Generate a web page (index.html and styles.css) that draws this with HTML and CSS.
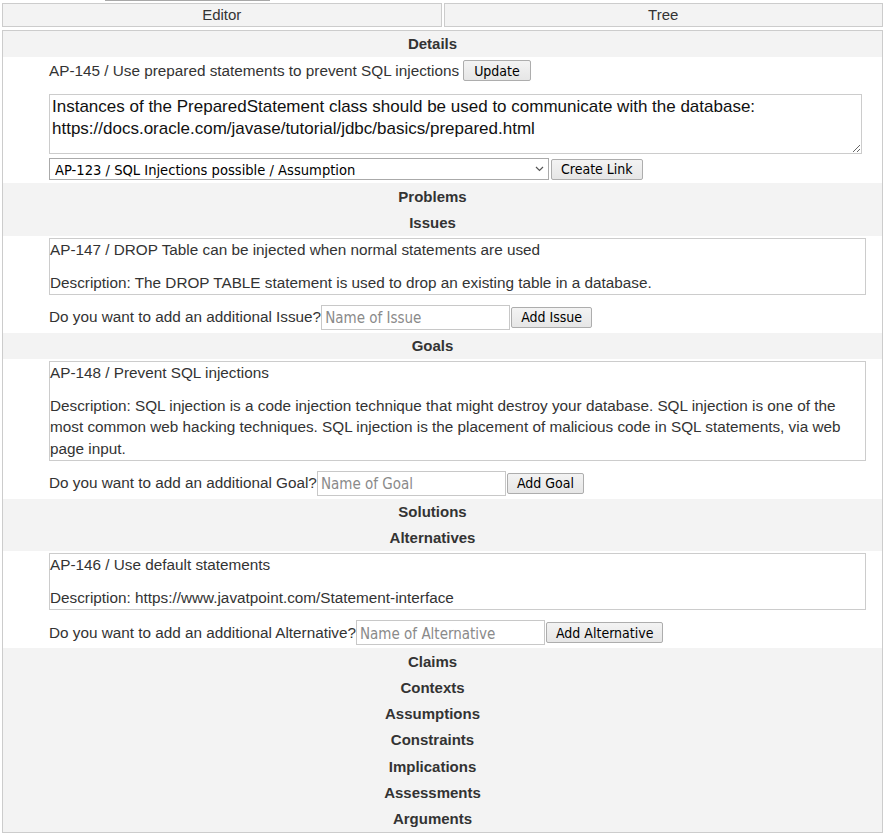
FILE: index.html
```html
<!DOCTYPE html>
<html lang="en">
<head>
<meta charset="utf-8">
<title>Editor</title>
<link rel="stylesheet" href="styles.css">
</head>
<body>
<div class="page">
  <div class="topbar"></div>
  <div class="tabs">
    <div class="tab">Editor</div>
    <div class="tab">Tree</div>
  </div>
  <div class="panel">
    <div class="section-h">Details</div>
    <div class="content">
      <div class="title-row"><span class="title-text">AP-145 / Use prepared statements to prevent SQL injections</span><button class="btn btn-update">Update</button></div>
      <textarea class="desc">Instances of the PreparedStatement class should be used to communicate with the database: https://docs.oracle.com/javase/tutorial/jdbc/basics/prepared.html</textarea>
      <div class="link-row">
        <div class="select-wrap">
          <select class="link-select"><option>AP-123 / SQL Injections possible / Assumption</option></select>
          <svg class="chev" width="9" height="6" viewBox="0 0 9 6"><path d="M1 1 L4.5 4.5 L8 1" fill="none" stroke="#555" stroke-width="1.2"/></svg>
        </div>
        <button class="btn btn-link">Create Link</button>
      </div>
    </div>
    <div class="section-h">Problems</div>
    <div class="section-h">Issues</div>
    <div class="content">
      <div class="card">
        <p class="card-title">AP-147 / DROP Table can be injected when normal statements are used</p>
        <p class="card-desc">Description: The DROP TABLE statement is used to drop an existing table in a database.</p>
      </div>
      <div class="add-row"><span>Do you want to add an additional Issue?</span><input class="name-input" type="text" placeholder="Name of Issue"><button class="btn btn-add">Add Issue</button></div>
    </div>
    <div class="section-h">Goals</div>
    <div class="content">
      <div class="card">
        <p class="card-title">AP-148 / Prevent SQL injections</p>
        <p class="card-desc">Description: SQL injection is a code injection technique that might destroy your database. SQL injection is one of the most common web hacking techniques. SQL injection is the placement of malicious code in SQL statements, via web page input.</p>
      </div>
      <div class="add-row"><span>Do you want to add an additional Goal?</span><input class="name-input" type="text" placeholder="Name of Goal"><button class="btn btn-add">Add Goal</button></div>
    </div>
    <div class="section-h">Solutions</div>
    <div class="section-h">Alternatives</div>
    <div class="content">
      <div class="card">
        <p class="card-title">AP-146 / Use default statements</p>
        <p class="card-desc">Description: https://www.javatpoint.com/Statement-interface</p>
      </div>
      <div class="add-row"><span>Do you want to add an additional Alternative?</span><input class="name-input" type="text" placeholder="Name of Alternative"><button class="btn btn-add">Add Alternative</button></div>
    </div>
    <div class="section-h">Claims</div>
    <div class="section-h">Contexts</div>
    <div class="section-h">Assumptions</div>
    <div class="section-h">Constraints</div>
    <div class="section-h">Implications</div>
    <div class="section-h">Assessments</div>
    <div class="section-h">Arguments</div>
  </div>
</div>
</body>
</html>
```
FILE: styles.css
```css
html, body {
  margin: 0;
  padding: 0;
  background: #fff;
}
body {
  font-family: "Liberation Sans", Arial, sans-serif;
  font-size: 15.3px;
  color: #333;
}
.page {
  padding: 0 4px 0 2px;
}
.topbar {
  width: 165px;
  height: 1px;
  margin-left: 103px;
  background: #a8a8a8;
}
.tabs {
  display: grid;
  grid-template-columns: 1fr 1fr;
  gap: 2px;
  margin-top: 2px;
}
.tab {
  border: 1px solid #ccc;
  background: #f3f3f3;
  text-align: center;
  line-height: 22px;
  font-size: 15px;
}
.panel {
  margin-top: 3px;
  border: 1px solid #ccc;
}
.section-h {
  background: #f3f3f3;
  text-align: center;
  font-weight: bold;
  font-size: 15px;
  line-height: 21.43px;
  padding: 2.4px 20px 2.4px 0;
}
.content {
  padding-left: 46px;
  background: #fff;
}
.title-row {
  display: flex;
  align-items: center;
  height: 21px;
  padding-top: 3px;
}
.title-text {
  margin-right: 4px;
}
.btn {
  font-family: "DejaVu Sans Condensed", "DejaVu Sans", sans-serif;
  font-size: 14px;
  color: #000;
  background: linear-gradient(#f3f3f3, #e6e6e6);
  border: 1px solid #adadad;
  border-radius: 2px;
  height: 21px;
  padding: 0 10px;
  margin: 0;
  box-sizing: border-box;
}
.btn-link,
.btn-add {
  padding: 0 9px;
}
.desc {
  display: block;
  box-sizing: border-box;
  width: 813px;
  height: 60px;
  margin-top: 13px;
  padding: 1px 2px;
  border: 1px solid #ccc;
  font-family: "Liberation Sans", Arial, sans-serif;
  font-size: 17px;
  line-height: 22px;
  color: #111;
}
.link-row {
  display: flex;
  align-items: center;
  margin-top: 4px;
  margin-bottom: 3px;
  gap: 2px;
}
.select-wrap {
  position: relative;
}
.link-select {
  appearance: none;
  -webkit-appearance: none;
  display: block;
  width: 500px;
  height: 22px;
  box-sizing: border-box;
  border: 1px solid #aaa;
  background: #fff;
  padding: 0 0 0 5px;
  margin: 0;
  font-family: "DejaVu Sans Condensed", "DejaVu Sans", sans-serif;
  font-size: 14.6px;
  color: #000;
  border-radius: 0;
}
.chev {
  position: absolute;
  right: 5px;
  top: 8px;
}
.card {
  width: 817px;
  box-sizing: border-box;
  border: 1px solid #ccc;
  margin-top: 2px;
  padding: 0 0 0.5px;
}
.card p {
  margin: 0;
  line-height: 21.5px;
}
.card .card-desc {
  margin-top: 11.5px;
}
.add-row {
  display: flex;
  align-items: center;
  height: 25px;
  margin-top: 10px;
  padding-bottom: 3px;
}
.name-input {
  width: 189px;
  height: 25px;
  box-sizing: border-box;
  border: 1px solid #c8c8c8;
  padding: 2px 3px 0;
  margin: 0 1px 0 0;
  font-family: "DejaVu Sans Condensed", "DejaVu Sans", sans-serif;
  font-size: 15px;
  color: #000;
}
.name-input::placeholder {
  color: #8a8a8a;
}
```
